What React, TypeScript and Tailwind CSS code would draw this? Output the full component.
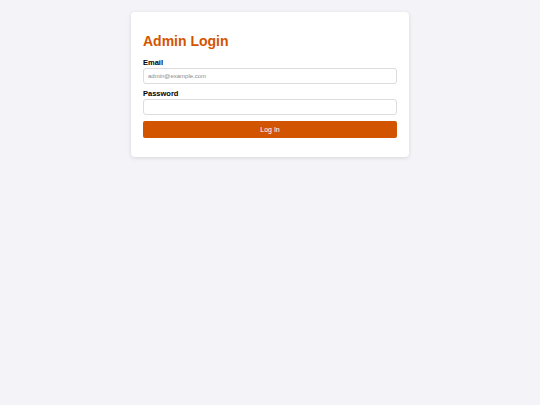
export default function App() {
  return (
    <div className="min-h-[405px] w-full bg-[#f3f3f8] pt-[12px]" style={{ fontFamily: '"Liberation Sans", Arial, sans-serif' }}>
      <div className="mx-auto w-[278px] rounded-[4px] bg-white px-[12px] pt-[20px] pb-[19px] shadow-[0_1px_4px_rgba(0,0,0,0.12)]">
        <h1 className="text-[14px] leading-[18px] font-bold text-[#d35400] mb-[8px]">Admin Login</h1>
        <label className="block text-[7.5px] leading-[9px] font-bold text-black mb-[1px]">Email</label>
        <input
          type="email"
          placeholder="admin@example.com"
          className="block w-full h-[16px] rounded-[3px] border border-[#dcdce0] px-[4px] text-[6px] placeholder:text-[#8a8a8a] outline-none mb-[5px]"
        />
        <label className="block text-[7.5px] leading-[9px] font-bold text-black mb-[1px]">Password</label>
        <input
          type="password"
          className="block w-full h-[16px] rounded-[3px] border border-[#dcdce0] px-[4px] text-[6px] outline-none mb-[6px]"
        />
        <button className="block w-full h-[17px] rounded-[2px] bg-[#d35400] text-white text-[7px] leading-[17px]">Log In</button>
      </div>
    </div>
  );
}
